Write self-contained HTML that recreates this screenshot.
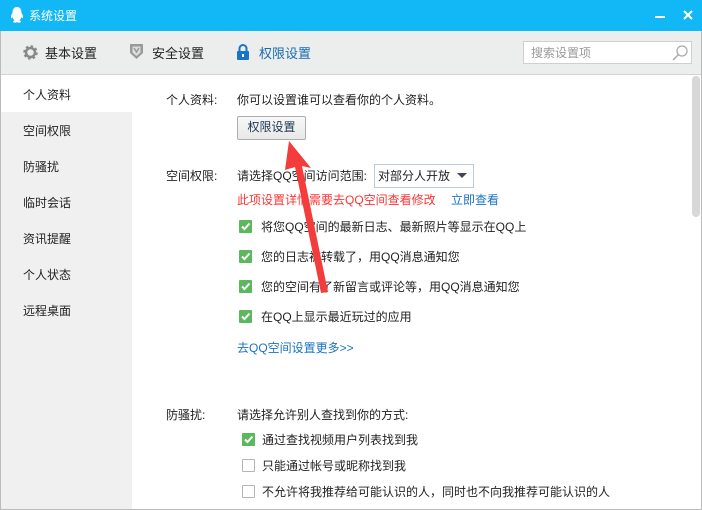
<!DOCTYPE html>
<html><head><meta charset="utf-8"><style>
*{margin:0;padding:0;box-sizing:border-box}
body{width:702px;height:510px;overflow:hidden;background:#fff;font-family:"Liberation Sans","Noto Sans CJK SC",sans-serif;font-size:12px;color:#222;position:relative}
.a{position:absolute;white-space:nowrap}
.title{left:0;top:0;width:702px;height:31px;background:#12b7f5}
.tool{left:0;top:31px;width:702px;height:44px;background:#eceeed;border-bottom:1px solid #d4d4d4}
.side{left:1px;top:76px;width:131px;height:434px;background:#f0f0f0}
.sel{left:1px;top:76px;width:131px;height:36px;background:#fff}
.cb{position:absolute;width:13px;height:13px;background:#5cb85c;border-radius:1px}
.cb.off{background:#fff;border:1px solid #b5b5b5}
.cb svg{position:absolute;left:1px;top:1px}
</style></head><body>
<div class="a title"></div>
<svg class="a" style="left:10px;top:7px" width="14" height="17" viewBox="0 0 14 17"><path d="M7 0C3.5 0 2.5 3 2.5 6 1 8 0.5 10 1.5 11.5 2 11 2.5 10.5 2.8 10 3 12 4 13 4.5 13.5 3 14 2.5 15 4 15.5 5.5 16 6.5 15.5 7 15 7.5 15.5 8.5 16 10 15.5 11.5 15 11 14 9.5 13.5 10 13 11 12 11.2 10 11.5 10.5 12 11 12.5 11.5 13.5 10 13 8 11.5 6 11.5 3 10.5 0 7 0Z" fill="#fff"/></svg>
<div class="a" style="left:29px;top:7px;color:#fff;font-size:12px">系统设置</div>
<div class="a" style="left:655px;top:16px;width:10px;height:2px;background:#fff"></div>
<svg class="a" style="left:683px;top:10px" width="10" height="10"><path d="M1 1L9 9M9 1L1 9" stroke="#fff" stroke-width="2"/></svg>
<div class="a tool"></div>
<svg class="a" style="left:22px;top:44px" width="17" height="17" viewBox="0 0 17 17"><circle cx="8.5" cy="8.5" r="5.5" fill="none" stroke="#888" stroke-width="3.5" stroke-dasharray="2.2 2.1"/><circle cx="8.5" cy="8.5" r="4.5" fill="none" stroke="#888" stroke-width="2.5"/></svg>
<div class="a" style="left:45px;top:43px;font-size:13px">基本设置</div>
<svg class="a" style="left:129px;top:43px" width="15" height="17" viewBox="0 0 15 17"><path d="M1 1H14V10L7.5 16 1 10Z" fill="#999"/><path d="M3.5 3.5H11.5V9.5L7.5 13 3.5 9.5Z" fill="#ddd"/><path d="M5 5L7.5 9 10 5" stroke="#999" stroke-width="1.5" fill="none"/></svg>
<div class="a" style="left:152px;top:43px;font-size:13px">安全设置</div>
<svg class="a" style="left:236px;top:43px" width="14" height="18" viewBox="0 0 14 18"><path d="M3.5 9V5.5A3.5 3.5 0 0 1 10.5 5.5V9" stroke="#1a73c4" stroke-width="2" fill="none"/><rect x="1" y="8" width="12" height="9" rx="1" fill="#1a73c4"/><rect x="6" y="11" width="2" height="3" fill="#fff"/></svg>
<div class="a" style="left:259px;top:43px;font-size:13px;color:#1a6cb0">权限设置</div>
<div class="a" style="left:523px;top:41px;width:169px;height:23px;background:#fff;border:1px solid #cfcfcf"></div>
<div class="a" style="left:531px;top:44px;color:#999;font-size:12px">搜索设置项</div>
<svg class="a" style="left:671px;top:44px" width="18" height="18"><circle cx="11" cy="7" r="5" fill="none" stroke="#aaa" stroke-width="1.3"/><path d="M7.5 10.5L2 16" stroke="#aaa" stroke-width="1.5"/></svg>
<div class="a side"></div>
<div class="a sel"></div>
<div class="a" style="left:23px;top:86px">个人资料</div>
<div class="a" style="left:23px;top:122px">空间权限</div>
<div class="a" style="left:23px;top:158px">防骚扰</div>
<div class="a" style="left:23px;top:194px">临时会话</div>
<div class="a" style="left:23px;top:230px">资讯提醒</div>
<div class="a" style="left:23px;top:266px">个人状态</div>
<div class="a" style="left:23px;top:302px">远程桌面</div>
<div class="a" style="left:692px;top:76px;width:8px;height:141px;background:#d8d8d8;border-radius:4px"></div>
<div class="a" style="left:166px;top:91px">个人资料:</div>
<div class="a" style="left:237px;top:91px">你可以设置谁可以查看你的个人资料。</div>
<div class="a" style="left:237px;top:116px;width:69px;height:24px;border:1px solid #adadad;border-radius:2px;background:linear-gradient(#f8f8f8,#e8e8e8);text-align:center;line-height:21px;color:#1e3550">权限设置</div>
<div class="a" style="left:166px;top:167px">空间权限:</div>
<div class="a" style="left:237px;top:167px">请选择QQ空间访问范围:</div>
<div class="a" style="left:374px;top:164px;width:100px;height:24px;border:1px solid #bcd;background:#fff"></div>
<div class="a" style="left:378px;top:167px">对部分人开放</div>
<svg class="a" style="left:457px;top:173px" width="10" height="6"><path d="M0 0H10L5 5Z" fill="#445"/></svg>
<div class="a" style="left:237px;top:191px;color:#f33">此项设置详情需要去QQ空间查看修改</div>
<div class="a" style="left:451px;top:191px;color:#1a73c4">立即查看</div>
<div class="cb" style="left:239px;top:220px"><svg width="11" height="11"><path d="M2 5.5L4.5 8 9.5 2.5" stroke="#fff" stroke-width="2" fill="none"/></svg></div>
<div class="a" style="left:261px;top:218px">将您QQ空间的最新日志、最新照片等显示在QQ上</div>
<div class="cb" style="left:239px;top:250px"><svg width="11" height="11"><path d="M2 5.5L4.5 8 9.5 2.5" stroke="#fff" stroke-width="2" fill="none"/></svg></div>
<div class="a" style="left:261px;top:248px">您的日志被转载了，用QQ消息通知您</div>
<div class="cb" style="left:239px;top:280px"><svg width="11" height="11"><path d="M2 5.5L4.5 8 9.5 2.5" stroke="#fff" stroke-width="2" fill="none"/></svg></div>
<div class="a" style="left:261px;top:278px">您的空间有了新留言或评论等，用QQ消息通知您</div>
<div class="cb" style="left:239px;top:310px"><svg width="11" height="11"><path d="M2 5.5L4.5 8 9.5 2.5" stroke="#fff" stroke-width="2" fill="none"/></svg></div>
<div class="a" style="left:261px;top:308px">在QQ上显示最近玩过的应用</div>
<div class="a" style="left:237px;top:339px;color:#1a73c4">去QQ空间设置更多&gt;&gt;</div>
<div class="a" style="left:166px;top:406px">防骚扰:</div>
<div class="a" style="left:237px;top:406px">请选择允许别人查找到你的方式:</div>
<div class="cb" style="left:242px;top:433px"><svg width="11" height="11"><path d="M2 5.5L4.5 8 9.5 2.5" stroke="#fff" stroke-width="2" fill="none"/></svg></div>
<div class="a" style="left:262px;top:431px">通过查找视频用户列表找到我</div>
<div class="cb off" style="left:242px;top:459px"></div>
<div class="a" style="left:262px;top:457px">只能通过帐号或昵称找到我</div>
<div class="cb off" style="left:242px;top:485px"></div>
<div class="a" style="left:262px;top:483px">不允许将我推荐给可能认识的人，同时也不向我推荐可能认识的人</div>
<svg class="a" style="left:0;top:0" width="702" height="510"><path d="M289 141L311 168 302 166 328 292 321 293 295 167 285 170Z" fill="#f33c3c"/></svg>
<div class="a" style="left:0;top:31px;width:1px;height:479px;background:#bbb"></div>
<div class="a" style="left:701px;top:31px;width:1px;height:479px;background:#bbb"></div>
<div class="a" style="left:0;top:509px;width:702px;height:1px;background:#bbb"></div>
</body></html>
